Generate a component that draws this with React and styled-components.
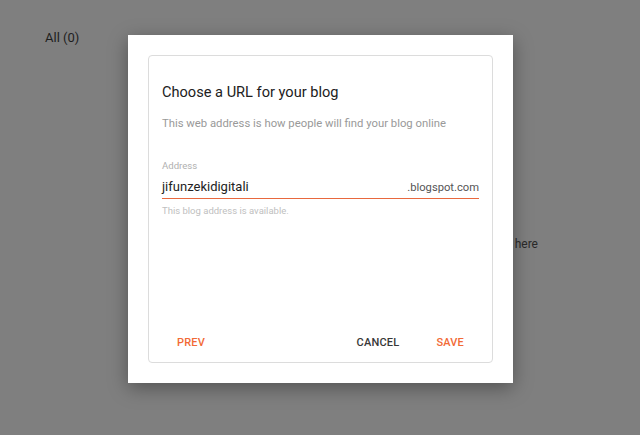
import React from 'react'
import styled, { createGlobalStyle } from 'styled-components'

const GlobalStyle = createGlobalStyle`
  body {
    margin: 0;
    background: #7f7f7f;
    font-family: Roboto, "Liberation Sans", Arial, sans-serif;
  }
`

const Page = styled.div`
  position: relative;
  height: 435px;
  box-sizing: border-box;
  padding: 30px 102px 0 45px;
`
const Filter = styled.div`
  font-size: 13px;
  line-height: 16px;
  color: #1e1e1e;
`
const EmptyState = styled.div`
  margin-top: 190px;
  text-align: right;
  font-size: 12px;
  line-height: 16px;
  color: #2a2a2a;
`

const Dialog = styled.div`
  position: absolute;
  top: 35px;
  left: 128px;
  width: 385px;
  height: 348px;
  box-sizing: border-box;
  padding: 20px;
  background: #fff;
  box-shadow: 0 5px 18px rgba(0, 0, 0, 0.35);
`
const Card = styled.div`
  height: 100%;
  box-sizing: border-box;
  border: 1px solid #dcdcdc;
  border-radius: 4px;
  padding: 26px 13px 3px;
  display: flex;
  flex-direction: column;
`
const Title = styled.h2`
  margin: 0;
  font-size: 14.6px;
  line-height: 20px;
  font-weight: 400;
  color: #212121;
`
const Subtitle = styled.p`
  margin: 14px 0 0;
  font-size: 11.3px;
  line-height: 16px;
  color: #999;
`
const Label = styled.div`
  margin-top: 27px;
  font-size: 9.6px;
  line-height: 14px;
  color: #b0b0b0;
`
const Field = styled.div`
  margin-top: 5px;
  display: flex;
  justify-content: space-between;
  align-items: baseline;
  padding-bottom: 2px;
  box-shadow: inset 0 -1px 0 rgb(232, 104, 62);
`
const Value = styled.span`
  font-size: 13px;
  line-height: 18px;
  color: #222;
`
const Suffix = styled.span`
  font-size: 11.2px;
  line-height: 18px;
  color: #555;
`
const Helper = styled.div`
  margin-top: 6px;
  font-size: 9.5px;
  line-height: 12px;
  color: #c0c0c0;
`
const Actions = styled.div`
  margin-top: auto;
  height: 36px;
  display: flex;
  align-items: center;
  gap: 7px;
`
const Spacer = styled.div`
  flex: 1;
`
const Button = styled.button`
  border: none;
  background: none;
  padding: 0 15px;
  height: 36px;
  margin-top: 2px;
  font-family: inherit;
  font-size: 11px;
  font-weight: 500;
  letter-spacing: 0.2px;
  text-transform: uppercase;
  color: ${p => (p.$accent ? '#f26a36' : '#383838')};
  cursor: pointer;
`

export default function App() {
  return (
    <>
      <GlobalStyle />
      <Page>
        <Filter>All (0)</Filter>
        <EmptyState>No blogs here</EmptyState>
        <Dialog>
          <Card>
            <Title>Choose a URL for your blog</Title>
            <Subtitle>This web address is how people will find your blog online</Subtitle>
            <Label>Address</Label>
            <Field>
              <Value>jifunzekidigitali</Value>
              <Suffix>.blogspot.com</Suffix>
            </Field>
            <Helper>This blog address is available.</Helper>
            <Actions>
              <Button $accent>Prev</Button>
              <Spacer />
              <Button>Cancel</Button>
              <Button $accent>Save</Button>
            </Actions>
          </Card>
        </Dialog>
      </Page>
    </>
  )
}
